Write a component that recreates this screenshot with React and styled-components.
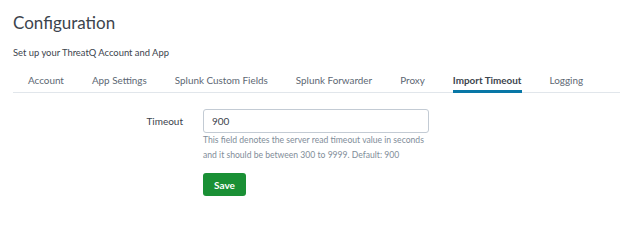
import React from "react";
import styled, { createGlobalStyle } from "styled-components";

const Global = createGlobalStyle`
  html, body { margin: 0; padding: 0; background: #fff; }
  body { font-family: Lato, "Open Sans", "Liberation Sans", sans-serif; color: #3c444d; }
  * { box-sizing: border-box; }
`;

const Page = styled.div`
  padding: 13px 0 0 13px;
`;

const Title = styled.h1`
  margin: 0;
  font-size: 17px;
  font-weight: 400;
  line-height: 20px;
  color: #3c444d;
`;

const Subtitle = styled.p`
  margin: 14px 0 0;
  font-size: 9.4px;
  line-height: 12px;
  color: #3c444d;
`;

const Tabs = styled.nav`
  display: flex;
  margin-top: 8px;
  border-bottom: 1px solid #e1e6eb;
  padding-left: 1px;
`;

const Tab = styled.div`
  margin: 0 14px -1px;
  padding: 7px 0 4px;
  font-size: 9.9px;
  line-height: 12px;
  color: ${(p) => (p.$active ? "#3c444d" : "#5c6773")};
  font-weight: ${(p) => (p.$active ? 700 : 400)};
  border-bottom: 3px solid ${(p) => (p.$active ? "#0877a6" : "transparent")};
  white-space: nowrap;
`;

const Form = styled.div`
  display: grid;
  grid-template-columns: 170px 226px;
  column-gap: 20px;
  margin-top: 16px;
`;

const Label = styled.label`
  justify-self: end;
  font-size: 10px;
  line-height: 24px;
  color: #3c444d;
`;

const Field = styled.div`
  display: flex;
  flex-direction: column;
`;

const Input = styled.input`
  width: 226px;
  height: 24px;
  border: 1px solid #c3cbd4;
  border-radius: 3px;
  padding: 0 8px;
  font-family: inherit;
  font-size: 10px;
  color: #3c444d;
  outline: none;
`;

const Help = styled.div`
  margin-top: 0;
  font-size: 8.6px;
  line-height: 15px;
  color: #818d99;
  white-space: nowrap;
`;

const SaveButton = styled.button`
  margin-top: 10px;
  align-self: flex-start;
  width: 43px;
  height: 23px;
  padding: 0;
  border: none;
  border-radius: 3px;
  background: #1a9035;
  color: #fff;
  font-family: inherit;
  font-weight: 700;
  font-size: 10px;
  cursor: pointer;
`;

const tabs = [
  "Account",
  "App Settings",
  "Splunk Custom Fields",
  "Splunk Forwarder",
  "Proxy",
  "Import Timeout",
  "Logging",
];

export default function App() {
  return (
    <>
      <Global />
      <Page>
        <Title>Configuration</Title>
        <Subtitle>Set up your ThreatQ Account and App</Subtitle>
        <Tabs>
          {tabs.map((t) => (
            <Tab key={t} $active={t === "Import Timeout"}>
              {t}
            </Tab>
          ))}
        </Tabs>
        <Form>
          <Label htmlFor="timeout">Timeout</Label>
          <Field>
            <Input id="timeout" defaultValue="900" />
            <Help>
              This field denotes the server read timeout value in seconds
              <br />
              and it should be between 300 to 9999. Default: 900
            </Help>
            <SaveButton>Save</SaveButton>
          </Field>
        </Form>
      </Page>
    </>
  );
}
